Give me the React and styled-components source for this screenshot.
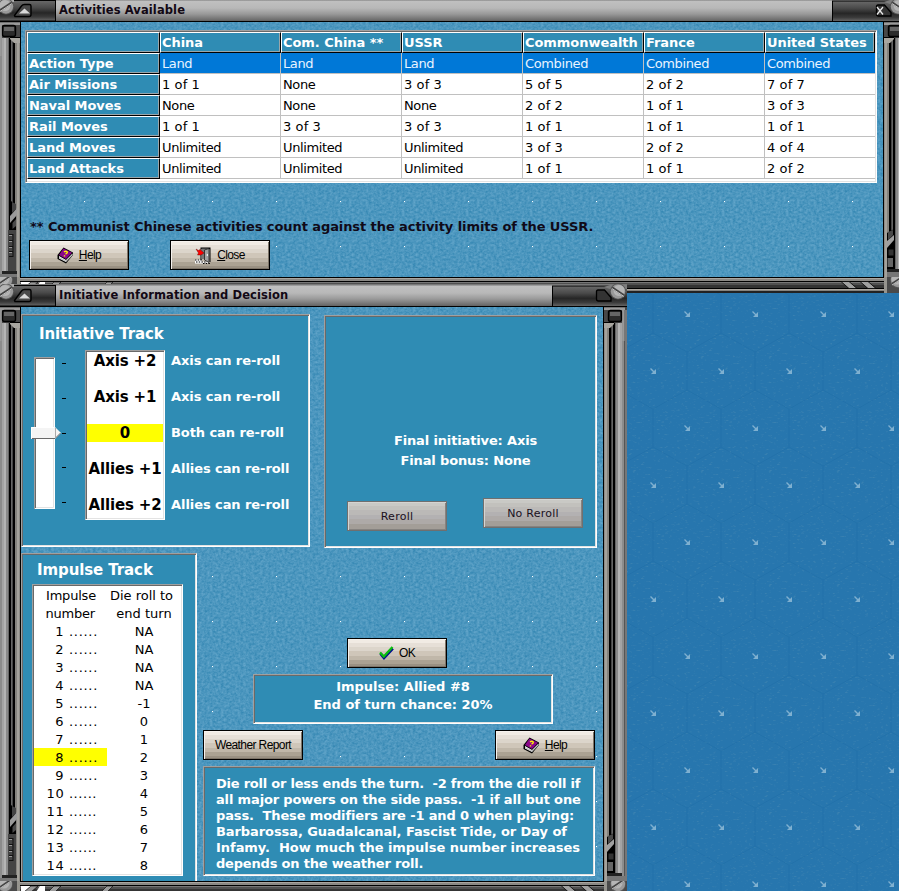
import React from 'react';
import styled, { createGlobalStyle, css } from 'styled-components';

const svgUrl = (s) => `url("data:image/svg+xml,${encodeURIComponent(s)}")`;

const waterTile = svgUrl(`<svg xmlns="http://www.w3.org/2000/svg" width="64" height="45"><filter id="n" x="0" y="0" width="100%" height="100%" color-interpolation-filters="sRGB"><feTurbulence type="fractalNoise" baseFrequency="0.36 0.42" numOctaves="3" seed="4" stitchTiles="stitch"/><feColorMatrix values="0.26 0 0 0 0.168  0.17 0 0 0 0.505  0.13 0 0 0 0.682  0 0 0 0 1"/></filter><rect width="64" height="45" filter="url(#n)"/><rect x="63" y="44" width="1" height="1" fill="#fff"/></svg>`);

const arrow = (x, y) =>
  `<path d="M${x - 2.5} ${y - 2.5}L${x + 1.5} ${y + 1.5}" stroke="#7fb0d0" stroke-width="1.3"/><path d="M${x + 3} ${y - 2}V${y + 3}H${x - 2}Z" fill="#7fb0d0"/>`;

const seaTile = svgUrl(`<svg xmlns="http://www.w3.org/2000/svg" width="68" height="114"><filter id="n" x="0" y="0" width="100%" height="100%" color-interpolation-filters="sRGB"><feTurbulence type="fractalNoise" baseFrequency="0.25 0.6" numOctaves="2" seed="9" stitchTiles="stitch"/><feColorMatrix values="0 0 0 0 0.42  0 0 0 0 0.62  0 0 0 0 0.72  3 0 0 0 -1.85"/></filter><rect width="68" height="114" fill="#2776ae"/><rect width="68" height="114" filter="url(#n)" opacity=".4"/><path d="M0 2V40L34 59V97L0 116M68 2V40L34 59M34 97L68 116M0 2L4 0M68 2L64 0" fill="none" stroke="#1b6ba6" stroke-opacity=".5" stroke-width="1"/>${arrow(34, 21)}${arrow(0, 78)}${arrow(68, 78)}</svg>`);

const Global = createGlobalStyle`
  * { box-sizing: border-box; }
  body { margin: 0; overflow: hidden; background: #2776ae; }
`;

const Desktop = styled.main`
  position: relative;
  width: 899px;
  height: 891px;
  overflow: hidden;
  background: ${seaTile} 653px 293px;
  font: 13px/18px 'DejaVu Sans', sans-serif;
  color: #000;
`;

/* ---------- window chrome ---------- */

const WindowFrame = styled.section`
  position: absolute;
  left: -3px;
  top: ${(p) => p.$top}px;
  width: ${(p) => p.$width}px;
  height: ${(p) => p.$height}px;
  display: grid;
  grid-template: 23px 1fr 16px / 24px 1fr 24px;
`;

const TitleBar = styled.header`
  grid-column: 1 / -1;
  display: flex;
  justify-content: space-between;
  border-bottom: 1px solid #000;
  background: linear-gradient(#777 0 1px, #c0c0c0 2px, #b8b8b8 9px, #999 15px, #6c6c6c 21px, #606060);
`;

const TitleText = styled.h1`
  flex: 1;
  margin: 0;
  padding-left: 3px;
  font-size: 11.5px;
  font-weight: bold;
  letter-spacing: 0.1px;
  line-height: 23px;
  color: #120814;
`;

const Client = styled.div`
  display: flex;
  flex-direction: column;
  align-items: flex-start;
  overflow: hidden;
  background: ${waterTile};
`;

const bars = `#000 0 1px, #8d8b86 1px 2px, #a4a29c 2px 4px, #85837e 4px 6px, #000 6px 8px,
  #464646 8px 9px, #666 9px 10px, #000 10px 12px, #666 12px 13px, #8a8a8a 13px 15px,
  #b4b4b4 15px 17px, #a4a4a4 17px 19px, #8c8c8c 19px 21px, #555 21px 22px, #777 22px 24px`;

const Rail = styled.div`
  display: flex;
  flex-direction: column;
  justify-content: space-between;
  height: 100%;
  background: linear-gradient(90deg, ${bars});
  transform: ${(p) => (p.$flip ? 'scaleX(-1)' : 'none')};
`;

const BottomRail = styled.div`
  grid-column: 1 / -1;
  display: flex;
  justify-content: space-between;
  background: linear-gradient(#000 0 1px, #aaa6a0 1px 2px, #8a8884 2px 4px, #000 4px 5px, #777 5px 6px,
    #505050 6px 8px, #343434 8px 11px, #000 11px 12px, #aaa6a0 12px 13px, #85837e 13px 14px, #222 14px 16px);
`;

const Svg = styled.svg`
  display: block;
  flex: none;
`;

const Screw = ({ x, y }) => (
  <g>
    <circle cx={x} cy={y} r="8" fill="#555" />
    <circle cx={x} cy={y} r="7.2" fill="#999" />
    <circle cx={x - 1} cy={y - 1} r="5.5" fill="#b5b5b5" />
    <path d={`M${x - 6} ${y + 4}L${x + 6} ${y - 4}`} stroke="#444" strokeWidth="2.4" />
    <path d={`M${x - 6} ${y + 5}L${x + 6} ${y - 3}`} stroke="#ccc" strokeWidth="0.9" />
  </g>
);

const SlantScrew = ({ x, y }) => (
  <g transform={`translate(${2 * x} 0) scale(-1 1)`}>
    <Screw x={x} y={y} />
  </g>
);

const CapGradient = ({ id }) => (
  <linearGradient id={id} x1="0" y1="0" x2="0" y2="1">
    <stop offset="0" stopColor="#6a6a6a" />
    <stop offset=".35" stopColor="#4a4a4a" />
    <stop offset=".6" stopColor="#262626" />
    <stop offset=".8" stopColor="#3a3a3a" />
    <stop offset="1" stopColor="#6a6a6a" />
  </linearGradient>
);

const LeftCap = () => (
  <Svg width="59" height="22" viewBox="-3 0 59 22">
    <defs><CapGradient id="capL" /></defs>
    <rect x="-3" y="1.5" width="58.5" height="20.5" fill="url(#capL)" stroke="#000" />
    <rect x="-3" y="0" width="17" height="3" fill="#aaa" />
    <path d="M14.500 16.500L21.500 7Q22.500 5.500 24.500 5.500H29.500Q31 5.500 31 7V15.500Q31 17.500 29 17.500H15Z" fill="#4a4a4a" stroke="#000" strokeWidth="1.4" />
    <path d="M19 14.500L24.500 9.500L30 14.500Z" fill="#d8d8d8" />
    <Screw x={6} y={7.5} />
  </Svg>
);

const RightCap = ({ cross }) => (
  <Svg width="75" height="22" viewBox="0 0 75 22">
    <defs><CapGradient id="capR" /></defs>
    <rect x=".5" y="2" width="75" height="20.500" fill="url(#capR)" stroke="#000" />
    <path d="M52 3L58 1H75V5H58Z" fill="#7c7c7c" />
    <path d="M44.500 7.500Q44.500 6 46 6H52.500L59 13.500V17H46.500Q44.500 17 44.500 15Z" fill="#333" stroke="#000" strokeWidth="1.3" />
    {cross && <path d="M45 8L51 15.500M51 8L45 15.500" stroke="#e8e8e8" strokeWidth="1.3" />}
    <SlantScrew x={66} y={7.5} />
  </Svg>
);

const RailTop = () => (
  <Svg width="24" height="34" viewBox="0 0 24 34">
    <path d="M1 0H24V3H19V16H1Z" fill="#484848" />
    <path d="M1 .5H22V3H1Z" fill="#9a9a9a" />
    <path d="M1 15.500H11V17L7 21H1Z" fill="#a8a6a0" />
    <path d="M1 15.500H11" stroke="#000" />
    <rect x="5.500" y="3.500" width="13" height="11" rx="2" fill="#2c2c2c" stroke="#000" strokeWidth="1.4" />
    <rect x="7" y="5" width="10" height="4" fill="#666" />
    <rect x="19.500" y="3" width="2" height="31" fill="#999" />
  </Svg>
);

const RailBottom = ({ tall }) => (
  <Svg width="24" height={tall ? 76 : 48} viewBox={`0 0 24 ${tall ? 76 : 48}`}>
    {tall ? (
      <g>
        <path d="M10 0V62H5V4Z" fill="#000" />
        <path d="M5 3L9 1V12L5 8Z" fill="#444" />
        <path d="M4 7L11 15V22L4 14Z" fill="#9a9a9a" />
        <path d="M5 18L8.500 22V28L5 25Z" fill="#4a4a4a" />
        <path d="M5 29H13V72H5Z" fill="#444" />
        <path d="M8 33V56M8 33.500H12M8 39.500H12M8 45.500H12M8 50.500H12M8 55.500H12" fill="none" stroke="#111" />
        <path d="M9 34.500H12M9 40.500H12M9 46.500H12M9 51.500H12" fill="none" stroke="#999" />
      </g>
    ) : (
      <g>
        <path d="M11 0V44H4V4Z" fill="#000" />
        <path d="M5 3L10 1V6L5 11Z" fill="#4a4a4a" />
        <path d="M4 12L11 6V11L4 19Z" fill="#a0a0a0" />
        <path d="M5 20H11V27H5Z" fill="#333" stroke="#000" />
        <path d="M4.500 29H10V38H4.500Z" fill="#666" />
      </g>
    )}
    <rect x="4" y={tall ? 70 : 40} width="15" height="3" fill="#222" />
    <rect x="4" y={tall ? 73 : 43} width="20" height="6" fill="#777" />
  </Svg>
);

const BottomLeft = () => (
  <Svg width="130" height="16" viewBox="-3 0 130 16">
    <path d="M-3 0H17V16H-3Z" fill="#4a4a4a" />
    <path d="M17 0H20V16H17Z" fill="#96948e" />
    <path d="M21 5H31L24 11H21ZM40 5H45V11H36Z" fill="#fff" />
    <path d="M31 5H38L31 11H24ZM54 5H61L55 11H48ZM107 5H113L107 11H101Z" fill="#9a9a9a" stroke="#000" strokeWidth=".6" />
    <Screw x={5} y={3} />
  </Svg>
);

const BottomRight = () => (
  <Svg width="80" height="16" viewBox="0 0 80 16">
    <path d="M14 4.500H22L30 11.500H22ZM33 4.500H41L49 11.500H41Z" fill="#a0a0a0" stroke="#000" strokeWidth=".8" />
    <path d="M57 0H60V16H57Z" fill="#96948e" />
    <path d="M60 0H80V16H60Z" fill="#4a4a4a" />
    <Screw x={71} y={3} />
  </Svg>
);

function GameWindow({ top, width, height, title, cross, children }) {
  return (
    <WindowFrame $top={top} $width={width} $height={height}>
      <TitleBar>
        <LeftCap />
        <TitleText>{title}</TitleText>
        <RightCap cross={cross} />
      </TitleBar>
      <Rail $flip><RailTop /><RailBottom tall /></Rail>
      <Client>{children}</Client>
      <Rail><RailTop /><RailBottom /></Rail>
      <BottomRail><BottomLeft /><BottomRight /></BottomRail>
    </WindowFrame>
  );
}

/* ---------- shared controls ---------- */

const sunken = css`
  border: 1px solid;
  border-color: #a0a0a0 #fff #fff #a0a0a0;
  box-shadow: inset 1px 1px #696969, inset -1px -1px #e3e3e3;
`;

const PushButton = styled.button`
  display: flex;
  flex: none;
  align-items: center;
  justify-content: center;
  gap: 5px;
  width: 100px;
  height: 30px;
  margin: 0;
  padding: 0;
  border: 1px solid #000;
  border-radius: 0;
  font: 12px 'Liberation Sans', sans-serif;
  letter-spacing: -0.6px;
  color: #000;
  background: linear-gradient(#f1ebe4 0 4px, #e6dfd7 4px 8px, #dcd5cb 8px 12px, #cfc6b9 12px 17px, #c0b7a9 17px 21px, #aba293 21px 25px, #9a9183 25px);
  box-shadow: inset 1px 1px #f6f2ee, inset -1px -1px #7d7468;
`;

const FadedButton = styled(PushButton)`
  margin-top: ${(p) => p.$drop || 0}px;
  border-color: #6f6f6f;
  font: 11px 'DejaVu Sans', sans-serif;
  letter-spacing: 0.25px;
  color: #1a101c;
  background: linear-gradient(#c9c9c5 0 4px, #c2c1bd 4px 8px, #bbb9b7 8px 13px, #b3b1b2 13px 17px, #aeaaa8 17px 22px, #a39e98 22px);
  box-shadow: inset 1px 1px #d5d5d2, inset -1px -1px #868380;
`;

const BookIcon = () => (
  <Svg width="17" height="17" viewBox="0 0 17 17">
    <path d="M6.500 .5L16 5.500V8L9 16.500L.5 12V8Z" fill="#000" />
    <path d="M6.500 1.500L15 5.800L9 12L2 8Z" fill="#8b078b" />
    <path d="M2 9L9 13L15.500 6.500V8L9 15L2 11.500Z" fill="#fff" />
    <path d="M2 10.500L9 14L15 7.600" fill="none" stroke="#888" strokeWidth=".6" />
    <path d="M7 5Q8.500 3.800 10 4.700Q11 6 8.500 7M7.500 8.300V9.500" fill="none" stroke="#fff200" strokeWidth="1.4" />
  </Svg>
);

const DoorIcon = () => (
  <Svg width="17" height="17" viewBox="0 0 17 17">
    <path d="M0 13.500H7M0 15.500H13" stroke="#fff" strokeWidth="1.8" />
    <path d="M0 13H7M1 15H12M8 16.500H15" stroke="#000" strokeWidth="1" strokeDasharray="1.500 1.200" />
    <path d="M5.500 .5H15.500V15H14.500V2H6.500V13H5.500Z" fill="#000" />
    <path d="M6.500 1.500H13V12H6.500Z" fill="#777" />
    <path d="M9.500 3L14 1.500V15.500L9.500 13Z" fill="#a0a0a0" stroke="#222" strokeWidth=".8" />
    <path d="M12.300 7V9" stroke="#fff" />
    <path d="M1 2L3.500 3.500L5 2.500L9 6L6 8H2.500L3.500 6Z" fill="#f00" stroke="#500" strokeWidth=".4" />
  </Svg>
);

const CheckIcon = () => (
  <Svg width="15" height="14" viewBox="0 0 15 14">
    <path d="M1.500 7.500L5 11.800L13.800 2.500" fill="none" stroke="#00128c" strokeWidth="2.800" />
    <path d="M1 6.500L4.800 10.500L13.500 1" fill="none" stroke="#0bbd10" strokeWidth="2.300" />
  </Svg>
);

const HelpButton = () => (
  <PushButton><BookIcon /><span><u>H</u>elp</span></PushButton>
);

/* ---------- activities ---------- */

const Activities = styled.div`
  ${sunken}
  display: grid;
  flex: none;
  grid-template-columns: 133px repeat(5, 121px) 110px;
  grid-auto-rows: 21px;
  width: 852px;
  height: 153px;
  margin: 8px 0 0 4px;
  padding: 1px;
  overflow: hidden;
  background: #fff;
`;

const HeadCell = styled.div`
  padding-left: 1px;
  border: 1px solid;
  border-color: #fff #000 #000 #fff;
  box-shadow: inset -1px -1px #9aa6aa;
  background: #2f8cb4;
  color: #fff;
  font-weight: bold;
  letter-spacing: -0.05px;
  line-height: 19px;
  white-space: nowrap;
`;

const DataCell = styled.div`
  padding-left: 2px;
  border: solid #c0c0c0;
  border-width: 0 1px 1px 0;
  line-height: 21px;
  letter-spacing: ${(p) => (p.$words ? -0.38 : 0.1)}px;
  white-space: nowrap;
  background: ${(p) => (p.$selected ? '#0078d7' : '#fff')};
  color: ${(p) => (p.$selected ? '#e9f4ff' : '#000')};
  &:nth-child(7n) { border-right: 0; }
`;

const Footnote = styled.p`
  margin: 35px 0 0 9px;
  font-weight: bold;
  letter-spacing: -0.08px;
  line-height: 18px;
  color: #100a18;
`;

const ButtonRow = styled.div`
  display: flex;
  gap: ${(p) => p.$gap || 0}px;
  margin: ${(p) => p.$margin};
`;

const powers = ['', 'China', 'Com. China **', 'USSR', 'Commonwealth', 'France', 'United States'];
const activityRows = [
  ['Action Type', 'Land', 'Land', 'Land', 'Combined', 'Combined', 'Combined'],
  ['Air Missions', '1 of 1', 'None', '3 of 3', '5 of 5', '2 of 2', '7 of 7'],
  ['Naval Moves', 'None', 'None', 'None', '2 of 2', '1 of 1', '3 of 3'],
  ['Rail Moves', '1 of 1', '3 of 3', '3 of 3', '1 of 1', '1 of 1', '1 of 1'],
  ['Land Moves', 'Unlimited', 'Unlimited', 'Unlimited', '3 of 3', '2 of 2', '4 of 4'],
  ['Land Attacks', 'Unlimited', 'Unlimited', 'Unlimited', '1 of 1', '1 of 1', '2 of 2'],
];

/* ---------- initiative ---------- */

const Panel = styled.section`
  ${sunken}
  flex: none;
  width: ${(p) => p.$width}px;
  height: ${(p) => p.$height}px;
  margin: ${(p) => p.$margin || 0};
  padding: ${(p) => p.$pad || 0};
  background: #2f8cb4;
  color: #fff;
  font-weight: bold;
`;

const TopRow = styled.div`
  display: flex;
  flex: none;
  gap: 14px;
  height: 234px;
  margin-top: 7px;
`;

const PanelHeading = styled.h2`
  margin: 0;
  font-size: 15px;
  line-height: 20px;
  letter-spacing: -0.1px;
`;

const ImpulseHeading = styled(PanelHeading)`
  padding-left: 15px;
`;

const TrackRow = styled.div`
  display: flex;
  align-items: flex-start;
  margin-top: 6px;
`;

const SliderSvg = styled(Svg)`
  margin: 7px 0 0 -8px;
`;

const LevelList = styled.div`
  ${sunken}
  display: flex;
  flex-direction: column;
  gap: 18px;
  width: 80px;
  height: 170px;
  margin-left: 17px;
  padding: 1px;
  background: #fff;
`;

const Level = styled.div`
  flex: none;
  height: 18px;
  font-size: 15px;
  line-height: 19px;
  letter-spacing: -0.15px;
  text-align: center;
  white-space: nowrap;
  color: #000;
  background: ${(p) => (p.$on ? '#ff0' : 'transparent')};
`;

const LevelNotes = styled.div`
  display: flex;
  flex-direction: column;
  gap: 18px;
  margin: 2px 0 0 6px;
  letter-spacing: -0.07px;
`;

const levels = [
  ['Axis +2', 'Axis can re-roll'],
  ['Axis +1', 'Axis can re-roll'],
  ['0', 'Both can re-roll'],
  ['Allies +1', 'Allies can re-roll'],
  ['Allies +2', 'Allies can re-roll'],
];

const Slider = () => (
  <SliderSvg width="37" height="154" viewBox="31 357 37 154">
    <rect x="34" y="357" width="21" height="152" fill="#a0a0a0" />
    <rect x="35" y="358" width="20" height="151" fill="#fff" />
    <path d="M35.500 508V358.500H54" fill="none" stroke="#696969" />
    <path d="M36 507.500H53.500V359" fill="none" stroke="#e3e3e3" />
    {[363, 398, 433, 467, 502].map((y) => <rect key={y} x="62" y={y} width="4" height="1" fill="#000" />)}
    <path d="M31 427H55L61 433L55 439H31Z" fill="#f4f4f4" />
    <path d="M31.500 438V427.500H54.500" fill="none" stroke="#fff" />
    <path d="M32 438.500H55L60.500 433" fill="none" stroke="#696969" />
    <path d="M55.500 428V438" stroke="#aaa" />
  </SliderSvg>
);

const Result = styled.p`
  margin: 0;
  line-height: ${(p) => p.$line}px;
  letter-spacing: ${(p) => p.$track || 0}px;
  text-align: center;
  white-space: pre-line;
`;

const LowerRow = styled.div`
  display: flex;
  flex: none;
  height: 328px;
  margin-top: 5px;
  overflow: hidden;
`;

const LowerColumn = styled.div`
  display: flex;
  flex-direction: column;
  align-items: flex-start;
  margin-left: 6px;
`;

const ImpulseList = styled.div`
  ${sunken}
  display: grid;
  grid-template-columns: 73px 74px;
  grid-auto-rows: 18px;
  width: 151px;
  height: 292px;
  margin: 4px 0 0 10px;
  padding: 1px;
  background: #fff;
  color: #000;
  font-weight: normal;
  line-height: 19px;
  white-space: nowrap;
`;

const ImpulseNumber = styled.div`
  padding-right: ${(p) => p.$pad}px;
  text-align: right;
  letter-spacing: ${(p) => p.$track}px;
  background: ${(p) => (p.$on ? '#ff0' : 'transparent')};
`;

const DieRoll = styled.div`
  padding-right: ${(p) => p.$nudge || 0}px;
  text-align: center;
`;

const rolls = ['NA', 'NA', 'NA', 'NA', '-1', '0', '1', '2', '3', '4', '5', '6', '7', '8'];

const RuleLine = styled.div`
  line-height: 16px;
  letter-spacing: ${(p) => p.$track}px;
  white-space: pre;
`;

const rules = [
  ['Die roll or less ends the turn.  -2 from the die roll if', -0.23],
  ['all major powers on the side pass.  -1 if all but one', -0.15],
  ['pass.  These modifiers are -1 and 0 when playing:', -0.14],
  ['Barbarossa, Guadalcanal, Fascist Tide, or Day of', -0.08],
  ['Infamy.  How much the impulse number increases', -0.04],
  ['depends on the weather roll.', -0.19],
];

export default function App() {
  return (
    <Desktop>
      <Global />
      <GameWindow top={-1} width={910} height={294} title="Activities Available" cross>
        <Activities>
          {powers.map((p) => <HeadCell key={p}>{p}</HeadCell>)}
          {activityRows.map(([name, ...cells], r) => (
            <React.Fragment key={name}>
              <HeadCell>{name}</HeadCell>
              {cells.map((c, i) => (
                <DataCell key={i} $selected={r === 0} $words={!c.includes(' ')}>{c}</DataCell>
              ))}
            </React.Fragment>
          ))}
        </Activities>
        <Footnote>** Communist Chinese activities count against the activity limits of the USSR.</Footnote>
        <ButtonRow $gap={41} $margin="4px 0 0 8px">
          <HelpButton />
          <PushButton><DoorIcon /><span><u>C</u>lose</span></PushButton>
        </ButtonRow>
      </GameWindow>

      <GameWindow top={284} width={630} height={613} title="Initiative Information and Decision">
        <TopRow>
          <Panel $width={289} $height={233} $pad="9px 0 0 17px">
            <PanelHeading>Initiative Track</PanelHeading>
            <TrackRow>
              <Slider />
              <LevelList>
                {levels.map(([label], i) => <Level key={label} $on={i === 2}>{label}</Level>)}
              </LevelList>
              <LevelNotes>
                {levels.map(([label, note]) => <span key={label}>{note}</span>)}
              </LevelNotes>
            </TrackRow>
          </Panel>
          <Panel $width={273} $height={233} $margin="1px 0 0" $pad="115px 12px 0 22px">
            <Result $line={20} $track={-0.14}>{'Final initiative: Axis\nFinal bonus: None'}</Result>
            <ButtonRow $gap={36} $margin="27px 0 0">
              <FadedButton $drop={3}>Reroll</FadedButton>
              <FadedButton>No Reroll</FadedButton>
            </ButtonRow>
          </Panel>
        </TopRow>
        <LowerRow>
          <Panel $width={176} $height={340} $pad="6px 0 0">
            <ImpulseHeading>Impulse Track</ImpulseHeading>
            <ImpulseList>
              <ImpulseNumber $pad={11} $track={-0.2}>Impulse</ImpulseNumber>
              <DieRoll $nudge={5}>Die roll to</DieRoll>
              <ImpulseNumber $pad={12} $track={-0.2}>number</ImpulseNumber>
              <DieRoll>end turn</DieRoll>
              {rolls.map((roll, i) => (
                <React.Fragment key={i}>
                  <ImpulseNumber $pad={i < 9 ? 9 : 10} $track={i < 9 ? 0.7 : 0.55} $on={i === 7}>{i + 1} ......</ImpulseNumber>
                  <DieRoll>{roll}</DieRoll>
                </React.Fragment>
              ))}
            </ImpulseList>
          </Panel>
          <LowerColumn>
            <ButtonRow $margin="85px 0 0 144px">
              <PushButton><CheckIcon /><span>OK</span></PushButton>
            </ButtonRow>
            <Panel $width={300} $height={50} $margin="6px 0 0 50px" $pad="3px 0 0">
              <Result $line={18}>{'Impulse: Allied #8\nEnd of turn chance: 20%'}</Result>
            </Panel>
            <ButtonRow $gap={192} $margin="6px 0 0">
              <PushButton>Weather Report</PushButton>
              <HelpButton />
            </ButtonRow>
            <Panel $width={392} $height={110} $margin="6px 0 0" $pad="9px 0 0 12px">
              {rules.map(([line, track]) => <RuleLine key={line} $track={track}>{line}</RuleLine>)}
            </Panel>
          </LowerColumn>
        </LowerRow>
      </GameWindow>
    </Desktop>
  );
}
